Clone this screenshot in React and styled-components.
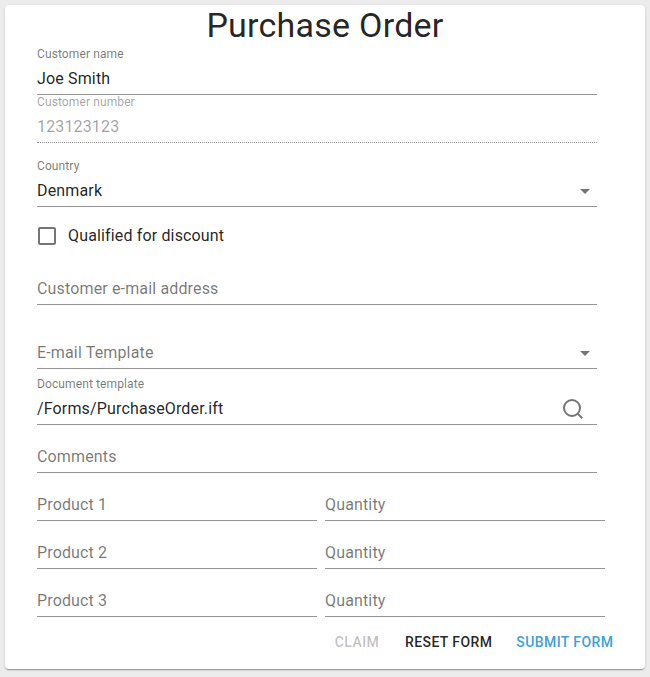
import React from "react";
import styled, { createGlobalStyle } from "styled-components";

const GlobalStyle = createGlobalStyle`
  * { box-sizing: border-box; }
  body { margin: 0; background: #ececec; font-family: Roboto, sans-serif; }
`;

const Page = styled.div`
  height: 677px;
  padding: 5px 5px 8px;
  overflow: hidden;
`;

const Card = styled.main`
  height: 664px;
  padding: 0 32px;
  background: #fff;
  border-radius: 4px;
  box-shadow: 0 2px 1px -1px rgba(0, 0, 0, 0.2), 0 1px 1px rgba(0, 0, 0, 0.14), 0 1px 3px rgba(0, 0, 0, 0.12);
`;

const Title = styled.h1`
  margin: 0;
  height: 42px;
  font-size: 34px;
  font-weight: 400;
  line-height: 40px;
  letter-spacing: 0.25px;
  text-align: center;
  color: rgba(0, 0, 0, 0.87);
`;

const Form = styled.form`
  display: flex;
  flex-direction: column;
`;

const FieldBox = styled.div`
  position: relative;
  width: ${(p) => p.$width || 560}px;
  height: 48px;
  margin-top: ${(p) => p.$gap || 0}px;
  padding-top: 16px;
  border-bottom: 1px ${(p) => (p.$disabled ? "dotted" : "solid")} rgba(0, 0, 0, 0.42);
`;

const Label = styled.label`
  position: absolute;
  top: 0;
  left: 0;
  font-size: 12px;
  line-height: 14px;
  letter-spacing: 0.11px;
  color: ${(p) => (p.$disabled ? "rgba(0,0,0,.38)" : "rgba(0,0,0,.54)")};
`;

const Value = styled.div`
  display: flex;
  align-items: center;
  height: 31px;
  font-size: 16px;
  letter-spacing: 0.15px;
  color: ${(p) => (p.$disabled ? "rgba(0,0,0,.38)" : p.$empty ? "rgba(0,0,0,.54)" : "rgba(0,0,0,.87)")};
`;

const Adornment = styled.svg`
  position: absolute;
  right: ${(p) => p.$right}px;
  top: ${(p) => p.$top}px;
`;

const Row = styled.div`
  display: flex;
  gap: 8px;
`;

const CheckRow = styled.label`
  display: flex;
  align-items: center;
  gap: 9px;
  height: 24px;
  margin-top: 17px;
  margin-left: -2px;
  font-size: 16px;
  letter-spacing: 0.15px;
  color: rgba(0, 0, 0, 0.87);
`;

const CheckText = styled.span`
  padding-bottom: 2px;
`;

const Actions = styled.div`
  display: flex;
  gap: 8px;
  margin: 7px 0 0 288px;
`;

const Action = styled.button`
  flex-shrink: 0;
  border: 0;
  background: none;
  min-width: 64px;
  padding: 6px 8px;
  font: 500 14px/24px Roboto, sans-serif;
  letter-spacing: 0.4px;
  white-space: nowrap;
  color: ${(p) => p.$color};
`;

function Field({ label, value, gap, width, disabled, icon }) {
  return (
    <FieldBox $gap={gap} $width={width} $disabled={disabled}>
      {value && <Label $disabled={disabled}>{label}</Label>}
      <Value $disabled={disabled} $empty={!value}>{value || label}</Value>
      {icon === "arrow" && (
        <Adornment $right={0} $top={20} width="24" height="24" viewBox="0 0 24 24">
          <path d="M7 10l5 5 5-5z" fill="#757575" />
        </Adornment>
      )}
      {icon === "search" && (
        <Adornment $right={12} $top={20} width="24" height="24" viewBox="0 0 24 24" fill="none" stroke="#757575" strokeWidth="2">
          <circle cx="11" cy="11" r="8" />
          <path d="M16.65 16.65L21.3 21.3" />
        </Adornment>
      )}
    </FieldBox>
  );
}

export default function App() {
  return (
    <>
      <GlobalStyle />
      <Page>
        <Card>
          <Title>Purchase Order</Title>
          <Form>
            <Field label="Customer name" value="Joe Smith" />
            <Field label="Customer number" value="123123123" disabled />
            <Field label="Country" value="Denmark" gap={16} icon="arrow" />
            <CheckRow>
              <svg width="24" height="24" viewBox="0 0 24 24">
                <path fill="#757575" d="M19 5v14H5V5h14m0-2H5c-1.1 0-2 .9-2 2v14c0 1.1.9 2 2 2h14c1.1 0 2-.9 2-2V5c0-1.1-.9-2-2-2z" />
              </svg>
              <CheckText>Qualified for discount</CheckText>
            </CheckRow>
            <Field label="Customer e-mail address" gap={9} />
            <Field label="E-mail Template" gap={16} icon="arrow" />
            <Field label="Document template" value="/Forms/PurchaseOrder.ift" gap={8} icon="search" />
            <Field label="Comments" />
            {[1, 2, 3].map((n) => (
              <Row key={n}>
                <Field label={`Product ${n}`} width={280} />
                <Field label="Quantity" width={280} />
              </Row>
            ))}
            <Actions>
              <Action type="button" $color="rgba(0,0,0,.26)" disabled>CLAIM</Action>
              <Action type="button" $color="rgba(0,0,0,.87)">RESET FORM</Action>
              <Action type="button" $color="#419fd4">SUBMIT FORM</Action>
            </Actions>
          </Form>
        </Card>
      </Page>
    </>
  );
}
